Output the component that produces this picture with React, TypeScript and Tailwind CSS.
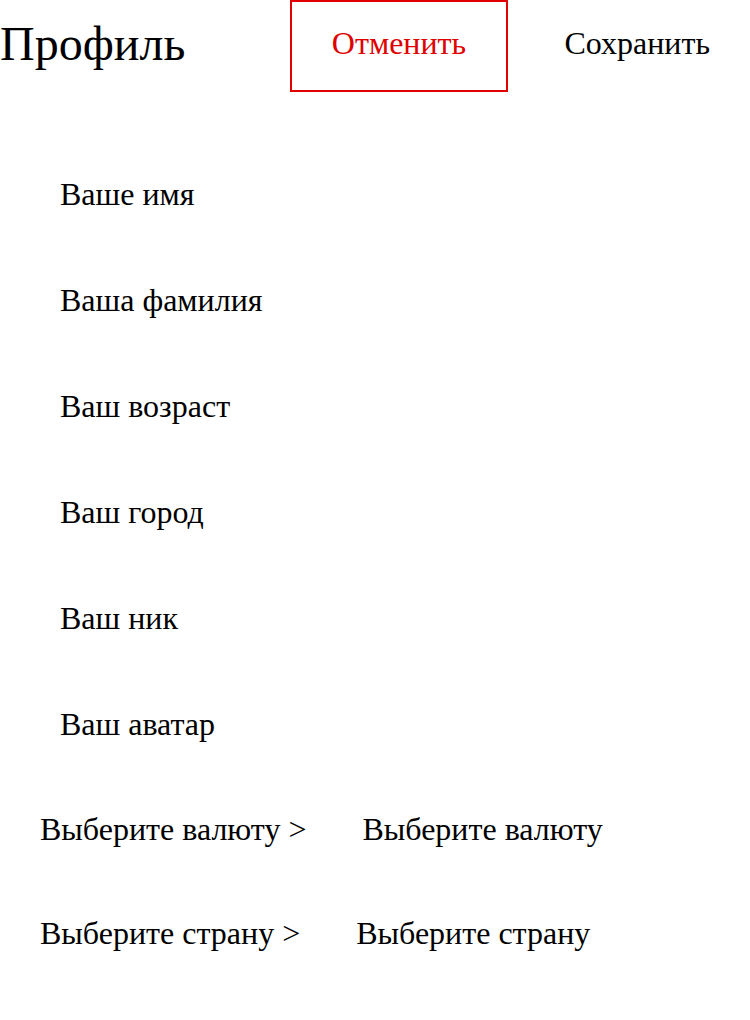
import { useState } from "react";

const fields = ["Ваше имя", "Ваша фамилия", "Ваш возраст", "Ваш город", "Ваш ник", "Ваш аватар"];

const pickers = [
  { label: "Выберите валюту >", value: "Выберите валюту" },
  { label: "Выберите страну >", value: "Выберите страну" },
];

export default function App() {
  const [saved, setSaved] = useState(false);

  return (
    <div className="min-h-[1020px] w-[750px] bg-white text-black font-['Liberation_Serif',serif]">
      <div className="flex h-[92px] items-center">
        <h1 className="w-[290px] pb-[4px] text-[48px] leading-none">Профиль</h1>
        <button className="h-[92px] w-[218px] border-2 border-[#e00000] pb-[6px] text-[32px] text-[#e00000]">
          Отменить
        </button>
        <button
          className="flex-1 pb-[6px] pr-[40px] text-right text-[32px]"
          onClick={() => setSaved(!saved)}
        >
          Сохранить
        </button>
      </div>

      <div className="flex flex-col pt-[49px]">
        {fields.map((f) => (
          <div key={f} className="flex h-[106px] items-center pl-[60px] text-[32px]">
            {f}
          </div>
        ))}
      </div>

      <div className="flex flex-col">
        {pickers.map((p) => (
          <div key={p.label} className="flex h-[104px] items-center gap-[56px] pl-[40px] text-[32px]">
            <span>{p.label}</span>
            <span>{p.value}</span>
          </div>
        ))}
      </div>
    </div>
  );
}
